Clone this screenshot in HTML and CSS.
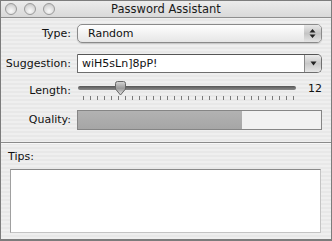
FILE: index.html
```html
<!DOCTYPE html>
<html>
<head>
    <title>Password Assistant</title>
    <link rel="stylesheet" href="styles.css">
</head>
<body>
    <div class="window">
        <div class="titlebar">
            <div class="lights">
                <span class="light"></span>
                <span class="light"></span>
                <span class="light"></span>
            </div>
            <div class="title">Password Assistant</div>
        </div>

        <div class="form">
            <label class="label">Type:</label>
            <div class="popup">
                <span class="popup-text">Random</span>
                <span class="popup-arrows">
                    <svg width="7" height="11" viewBox="0 0 7 11"><path d="M3.5 1 L6.5 4.5 L0.5 4.5 Z M3.5 10 L6.5 6.5 L0.5 6.5 Z" fill="#222"/></svg>
                </span>
            </div>

            <label class="label">Suggestion:</label>
            <div class="combo">
                <span class="combo-text">wiH5sLn]8pP!</span>
                <span class="combo-btn">
                    <svg width="7" height="5" viewBox="0 0 7 5"><path d="M0.5 0.5 L6.5 0.5 L3.5 4.5 Z" fill="#222"/></svg>
                </span>
            </div>

            <label class="label">Length:</label>
            <div class="slider-row">
                <div class="slider">
                    <div class="track"></div>
                    <div class="ticks"></div>
                    <svg class="thumb" width="13" height="15" viewBox="0 0 13 15">
                        <defs>
                            <linearGradient id="tg" x1="0" y1="0" x2="0" y2="1">
                                <stop offset="0" stop-color="#d6d6d6"/>
                                <stop offset="0.5" stop-color="#9a9a9a"/>
                                <stop offset="1" stop-color="#e4e4e4"/>
                            </linearGradient>
                        </defs>
                        <path d="M1.5 2.5 Q1.5 0.5 3.5 0.5 L9.5 0.5 Q11.5 0.5 11.5 2.5 L11.5 8 L6.5 14 L1.5 8 Z" fill="url(#tg)" stroke="#666" stroke-width="1"/>
                    </svg>
                </div>
                <span class="value">12</span>
            </div>

            <label class="label">Quality:</label>
            <div class="meter">
                <div class="meter-fill" style="width: 67.5%"></div>
            </div>
        </div>

        <div class="separator"></div>

        <div class="tips">
            <div class="tips-label">Tips:</div>
            <div class="tips-box"></div>
        </div>
    </div>
</body>
</html>
```

FILE: styles.css
```css
body {
    margin: 0;
    font-family: 'DejaVu Sans', 'Liberation Sans', sans-serif;
    font-size: 11px;
    color: #111;
}

.window {
    width: 332px;
    height: 241px;
    box-sizing: border-box;
    border: 1px solid #7c7c7c;
    border-bottom-width: 2px;
    background: repeating-linear-gradient(to bottom, #efefef 0 2px, #e8e8e8 2px 4px);
}

.titlebar {
    height: 17px;
    box-sizing: border-box;
    border-bottom: 1px solid #8e8e8e;
    background: linear-gradient(#ececec, #d9d9d9);
    display: flex;
    align-items: center;
    position: relative;
}

.lights {
    display: flex;
    gap: 7px;
    padding-left: 4px;
}

.light {
    width: 12px;
    height: 12px;
    box-sizing: border-box;
    border-radius: 50%;
    border: 1px solid #9a9a9a;
    background: radial-gradient(circle at 50% 70%, #fafafa 0, #dcdcdc 55%, #bdbdbd 100%);
}

.title {
    position: absolute;
    left: 0;
    right: 0;
    top: 0;
    text-align: center;
    line-height: 16px;
    font-size: 11.5px;
    color: #1a1a1a;
}

.form {
    display: grid;
    grid-template-columns: 70px 245px;
    grid-template-rows: 30px 27px 29px 20px;
    column-gap: 6px;
    padding-top: 6px;
}

.label {
    text-align: right;
    line-height: 19px;
    align-self: start;
}

.popup {
    height: 19px;
    box-sizing: border-box;
    border: 1px solid #8a8a8a;
    border-radius: 5px;
    background: linear-gradient(#ffffff, #f2f2f2 50%, #e6e6e6);
    display: flex;
    align-items: center;
    box-shadow: 0 1px 1px rgba(0,0,0,0.15);
}

.popup-text {
    flex: 1;
    padding-left: 10px;
    line-height: 17px;
}

.popup-arrows {
    width: 17px;
    height: 17px;
    border-radius: 0 4px 4px 0;
    background: linear-gradient(#e8e8e8, #c4c4c4 50%, #e4e4e4);
    display: flex;
    align-items: center;
    justify-content: center;
}

.combo {
    height: 19px;
    box-sizing: border-box;
    border: 1px solid #6e6e6e;
    border-top-color: #555;
    border-radius: 0 5px 5px 0;
    background: #fff;
    display: flex;
    align-items: center;
}

.combo-text {
    flex: 1;
    padding-left: 4px;
    line-height: 17px;
}

.combo-btn {
    width: 17px;
    height: 17px;
    box-sizing: border-box;
    border-left: 1px solid #8a8a8a;
    border-radius: 0 4px 4px 0;
    background: linear-gradient(#ececec, #c8c8c8 50%, #e6e6e6);
    display: flex;
    align-items: center;
    justify-content: center;
}

.slider-row {
    display: flex;
    align-items: flex-start;
}

.slider {
    position: relative;
    width: 220px;
    height: 22px;
}

.track {
    position: absolute;
    left: 1px;
    top: 5px;
    width: 218px;
    height: 4px;
    border-radius: 2px;
    background: linear-gradient(#555, #8a8a8a);
}

.ticks {
    position: absolute;
    left: 6px;
    top: 15px;
    width: 211px;
    height: 4px;
    background: repeating-linear-gradient(to right, #7a7a7a 0 1px, transparent 1px 7px);
}

.thumb {
    position: absolute;
    left: 37px;
    top: 0;
}

.value {
    flex: 1;
    text-align: right;
    line-height: 14px;
    padding-top: 1px;
}

.meter {
    height: 20px;
    box-sizing: border-box;
    border: 1px solid #858585;
    background: #f1f1f1;
}

.meter-fill {
    height: 100%;
    background: linear-gradient(#b2b2b2, #a6a6a6);
}

.separator {
    margin-top: 12px;
    height: 1px;
    background: #8a8a8a;
    border-bottom: 1px solid #f8f8f8;
}

.tips {
    padding: 6px 0 0 7px;
}

.tips-label {
    line-height: 14px;
}

.tips-box {
    margin: 5px 0 0 2px;
    width: 311px;
    height: 64px;
    box-sizing: border-box;
    border: 1px solid #c4c4c4;
    border-top-color: #8a8a8a;
    border-left-color: #a0a0a0;
    background: #fff;
}
```
